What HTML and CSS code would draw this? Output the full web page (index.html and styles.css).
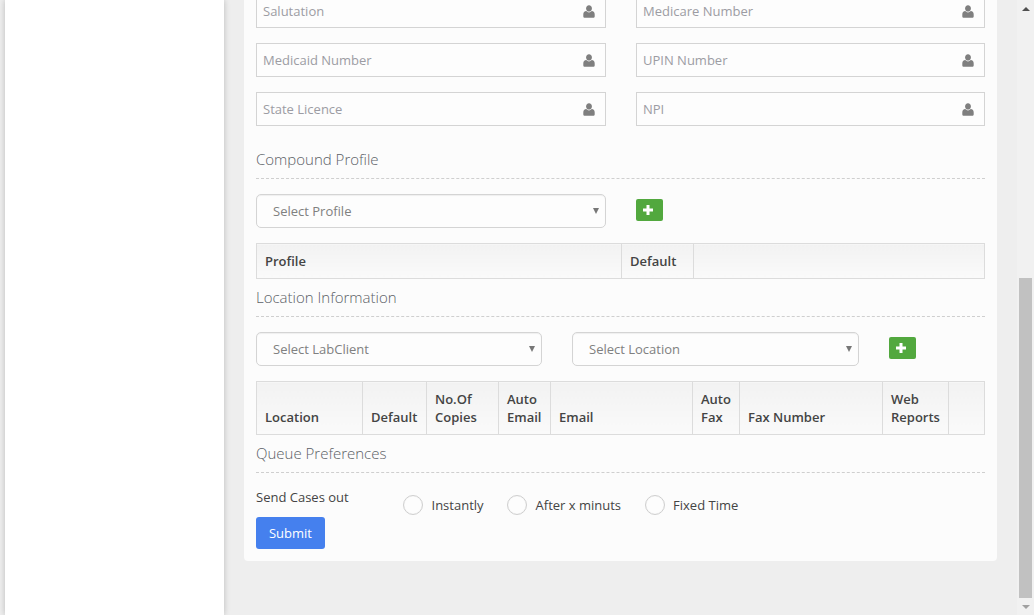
FILE: index.html
```html
<!DOCTYPE html>
<html>
<head>
    <title>Physician Details</title>
    <meta name="viewport" content="width=device-width, initial-scale=1.0">
    <link rel="stylesheet" href="styles.css">
</head>
<body>

    <svg class="icon-defs" width="0" height="0">
        <symbol id="user" viewBox="0 0 12 13">
            <path d="M6 0.3c1.7 0 2.9 1.3 2.9 3.1S7.7 6.6 6 6.6 3.100 5.200 3.100 3.400 4.300 0.300 6 0.300z"/>
            <path d="M3.300 6.100C4 6.900 5 7.400 6 7.400s2-0.500 2.700-1.300c1.900 0.100 3 1.400 3 3.500v1.700c0 1-0.700 1.500-1.600 1.500H1.900c-0.900 0-1.600-0.500-1.600-1.500V9.600c0-2.100 1.100-3.400 3-3.500z"/>
        </symbol>
        <symbol id="plus" viewBox="0 0 10 10">
            <path d="M3.500 0h3v3.500H10v3H6.500V10h-3V6.500H0v-3h3.500z"/>
        </symbol>
    </svg>

    <div class="page">
        <aside class="sidebar"></aside>

        <main class="content">
            <form class="panel">

                <div class="field-grid">
                    <label class="field">
                        <input type="text" placeholder="Salutation">
                        <svg class="field-icon"><use href="#user"/></svg>
                    </label>
                    <label class="field">
                        <input type="text" placeholder="Medicare Number">
                        <svg class="field-icon"><use href="#user"/></svg>
                    </label>
                    <label class="field">
                        <input type="text" placeholder="Medicaid Number">
                        <svg class="field-icon"><use href="#user"/></svg>
                    </label>
                    <label class="field">
                        <input type="text" placeholder="UPIN Number">
                        <svg class="field-icon"><use href="#user"/></svg>
                    </label>
                    <label class="field">
                        <input type="text" placeholder="State Licence">
                        <svg class="field-icon"><use href="#user"/></svg>
                    </label>
                    <label class="field">
                        <input type="text" placeholder="NPI">
                        <svg class="field-icon"><use href="#user"/></svg>
                    </label>
                </div>

                <h4 class="section-title first">Compound Profile</h4>

                <div class="picker-row">
                    <div class="select-box wide">
                        <select><option>Select Profile</option></select>
                    </div>
                    <button type="button" class="add-btn"><svg><use href="#plus"/></svg></button>
                </div>

                <table class="grid-table">
                    <colgroup>
                        <col class="c-profile">
                        <col class="c-profile-default">
                        <col>
                    </colgroup>
                    <thead>
                        <tr>
                            <th>Profile</th>
                            <th>Default</th>
                            <th></th>
                        </tr>
                    </thead>
                </table>

                <h4 class="section-title">Location Information</h4>

                <div class="picker-row">
                    <div class="select-box">
                        <select><option>Select LabClient</option></select>
                    </div>
                    <div class="select-box">
                        <select><option>Select Location</option></select>
                    </div>
                    <button type="button" class="add-btn"><svg><use href="#plus"/></svg></button>
                </div>

                <table class="grid-table">
                    <colgroup>
                        <col class="c-location">
                        <col class="c-default">
                        <col class="c-copies">
                        <col class="c-auto-email">
                        <col class="c-email">
                        <col class="c-auto-fax">
                        <col class="c-fax">
                        <col class="c-web">
                        <col>
                    </colgroup>
                    <thead>
                        <tr>
                            <th>Location</th>
                            <th>Default</th>
                            <th>No.Of Copies</th>
                            <th>Auto Email</th>
                            <th>Email</th>
                            <th>Auto Fax</th>
                            <th>Fax Number</th>
                            <th>Web Reports</th>
                            <th></th>
                        </tr>
                    </thead>
                </table>

                <h4 class="section-title">Queue Preferences</h4>

                <div class="queue-row">
                    <div class="queue-left">
                        <div class="queue-label">Send Cases out</div>
                        <button type="submit" class="submit-btn">Submit</button>
                    </div>
                    <div class="radio-list">
                        <label class="radio"><input type="radio" name="queue">Instantly</label>
                        <label class="radio"><input type="radio" name="queue">After x minuts</label>
                        <label class="radio"><input type="radio" name="queue">Fixed Time</label>
                    </div>
                </div>

            </form>
        </main>

        <div class="scrollbar">
            <span class="arrow-up"></span>
            <div class="track"><div class="thumb"></div></div>
            <span class="arrow-down"></span>
        </div>
    </div>

</body>
</html>
```

FILE: styles.css
```css
* {
    box-sizing: border-box;
}

body {
    margin: 0;
    background: #eeeeee;
    color: #444;
    font-family: "Open Sans", sans-serif;
    font-size: 13px;
    line-height: 18px;
}

.icon-defs {
    display: block;
    height: 0;
}

.page {
    display: flex;
    height: 615px;
    overflow: hidden;
}

.sidebar {
    flex: 0 0 219px;
    margin-left: 5px;
    background: #fff;
    box-shadow: 0 0 6px rgba(0,0,0,0.22);
}

.content {
    flex: 1;
    padding: 0 20px;
}

.panel {
    margin-top: -6px;
    padding: 0 12px 12px;
    background: #fcfcfc;
    border-radius: 0 0 4px 4px;
}

/* inputs with user icon */
.field-grid {
    display: grid;
    grid-template-columns: 350px 349px;
    column-gap: 30px;
    row-gap: 15px;
}

.field {
    position: relative;
    display: block;
}

.field input {
    display: block;
    width: 100%;
    height: 34px;
    padding: 0 30px 0 6px;
    border: 1px solid #d4d4d4;
    background: #fdfdfd;
    color: #444;
    font-family: inherit;
    font-size: 13px;
    outline: none;
}

.field input::placeholder {
    color: #9c9ca3;
    opacity: 1;
}

.field-icon {
    position: absolute;
    top: 11px;
    right: 11px;
    width: 12px;
    height: 13px;
    fill: #7f7f7f;
}

.section-title {
    margin: 8px 0 15px;
    padding-bottom: 8px;
    border-bottom: 1px dashed #cfcfcf;
    color: #5b6066;
    font-size: 15px;
    font-weight: 300;
    line-height: 21px;
}

.section-title.first {
    margin-top: 23px;
}

/* select rows */
.picker-row {
    display: flex;
    align-items: flex-start;
    gap: 30px;
    margin-bottom: 15px;
}

.select-box {
    position: relative;
    flex: 0 0 286px;
}

.select-box + .select-box {
    flex-basis: 287px;
}

.select-box.wide {
    flex-basis: 350px;
}

.select-box select {
    display: block;
    width: 100%;
    height: 34px;
    padding: 0 24px 0 16px;
    border: 1px solid #d4d4d4;
    border-radius: 5px;
    background: #fdfdfd;
    box-shadow: inset 0 1px 1px rgba(0,0,0,0.06);
    color: #808080;
    font-family: inherit;
    font-size: 13px;
    appearance: none;
    -webkit-appearance: none;
    outline: none;
}

.select-box::after {
    content: "";
    position: absolute;
    top: 14px;
    right: 7px;
    border-left: 3px solid transparent;
    border-right: 3px solid transparent;
    border-top: 6px solid #777;
}

.add-btn {
    display: flex;
    align-items: center;
    justify-content: center;
    width: 27px;
    height: 22px;
    margin-top: 5px;
    padding: 0 3px 0 0;
    border: 0;
    border-radius: 2px;
    background: #52a83e;
}

.add-btn svg {
    width: 10px;
    height: 10px;
    fill: #fff;
}

/* tables */
.grid-table {
    width: 100%;
    table-layout: fixed;
    border-collapse: collapse;
}

.grid-table th {
    padding: 8px;
    border: 1px solid #dcdcdc;
    background: linear-gradient(#f2f2f2, #fafafa);
    color: #444;
    font-size: 13px;
    font-weight: 600;
    text-align: left;
    vertical-align: bottom;
}

.c-profile { width: 365px; }
.c-profile-default { width: 72px; }

.c-location { width: 106px; }
.c-default { width: 64px; }
.c-copies { width: 72px; }
.c-auto-email { width: 52px; }
.c-email { width: 142px; }
.c-auto-fax { width: 47px; }
.c-fax { width: 143px; }
.c-web { width: 66px; }

/* queue preferences */
.queue-row {
    display: flex;
}

.queue-left {
    flex: 0 0 147px;
}

.queue-label {
    margin-bottom: 11px;
}

.radio-list {
    display: flex;
    gap: 23.500px;
    margin-top: 7px;
}

.radio {
    display: flex;
    align-items: center;
    height: 20px;
}

.radio input {
    width: 20px;
    height: 20px;
    margin: 0 8.500px 0 0;
    border: 1px solid #cfcfcf;
    border-radius: 50%;
    background: #fdfdfd;
    box-shadow: inset 0 0 1px rgba(0,0,0,0.1);
    appearance: none;
    -webkit-appearance: none;
}

.submit-btn {
    display: block;
    width: 69px;
    height: 32px;
    padding: 0;
    border: 0;
    border-radius: 3px;
    background: #4580ee;
    color: #fff;
    font-family: inherit;
    font-size: 13px;
}

/* fake scrollbar since the page is shown scrolled down */
.scrollbar {
    display: flex;
    flex: 0 0 17px;
    flex-direction: column;
    align-items: center;
    background: #f1f1f1;
}

.track {
    flex: 1;
    width: 100%;
    padding: 0 2px;
}

.thumb {
    width: 13px;
    height: 320px;
    margin-top: 261px;
    background: #c1c1c1;
}

.arrow-up,
.arrow-down {
    flex: 0 0 0;
    width: 0;
    height: 0;
    border-left: 4px solid transparent;
    border-right: 4px solid transparent;
}

.arrow-up {
    margin: 7px 0 6px;
    border-bottom: 4px solid #505050;
}

.arrow-down {
    margin: 5px 0 6px;
    border-top: 4px solid #a0a0a0;
}
```
